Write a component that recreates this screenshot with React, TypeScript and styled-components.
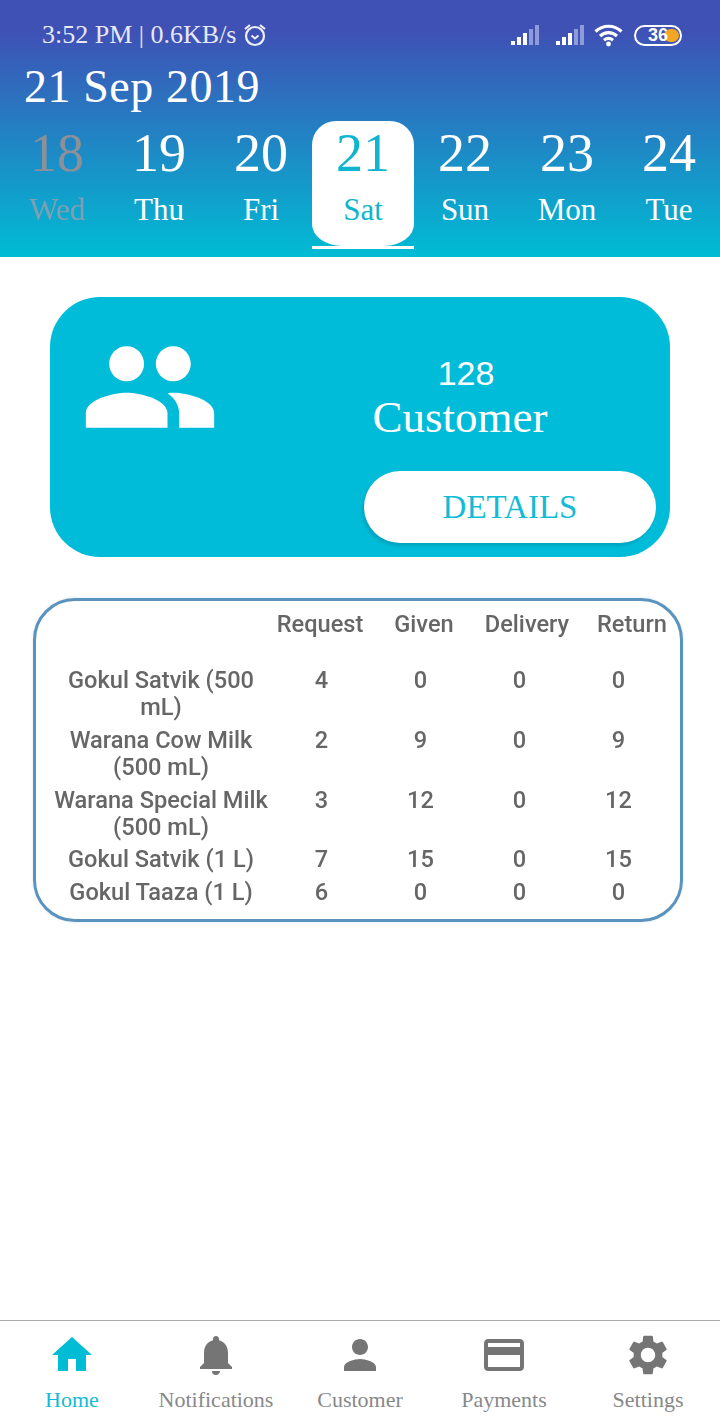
import React from "react";
import styled, { createGlobalStyle } from "styled-components";
import { MdHome, MdNotifications, MdPerson, MdCreditCard, MdSettings, MdPeople } from "react-icons/md";

const Global = createGlobalStyle`
  html, body { margin: 0; padding: 0; background: #fff; }
  * { box-sizing: border-box; }
`;
const SERIF = `"Liberation Serif", serif`;

const Page = styled.div`
  width: 720px; height: 1424px; display: flex; flex-direction: column; background: #fff;
  font-family: ${SERIF}; overflow: hidden;
`;
const Header = styled.header`
  height: 257px; flex: none; padding: 0 6px; color: #fff;
  background: linear-gradient(180deg, #3f51b5 0%, #3f51b5 12%, #00bcd4 100%);
`;
const StatusBar = styled.div`
  height: 70px; display: flex; align-items: center; justify-content: space-between;
  padding: 0 32px 0 36px; color: #e6e8f6; font-size: 26px;
`;
const StatusLeft = styled.div`display: flex; align-items: center; gap: 6px;`;
const StatusRight = styled.div`display: flex; align-items: center; gap: 10px;`;
const SignalGroup = styled.div`display: flex; align-items: center; gap: 17px;`;
const DateTitle = styled.div`
  height: 51px; padding-left: 18px; font-size: 46px; line-height: 34px; letter-spacing: 0.56px;
`;
const Days = styled.div`display: grid; grid-template-columns: repeat(7, 102px);`;
const DayCell = styled.div<{ $selected?: boolean }>`
  height: 128px; border-bottom: 3px solid ${p => (p.$selected ? "#fff" : "transparent")};
`;
const DayInner = styled.div<{ $selected?: boolean }>`
  height: 125px; display: flex; flex-direction: column; align-items: center;
  padding-top: 1px;
  border-radius: 24px 24px 30px 30px / 24px 24px 22px 22px;
  background: ${p => (p.$selected ? "#fff" : "transparent")};
  color: ${p => (p.$selected ? "#0fb5cf" : "#fff")};
`;
const DayNum = styled.span<{ $past?: boolean }>`
  font-size: 54px; line-height: 62px; color: ${p => (p.$past ? "#8b9099" : "inherit")};
`;
const DayName = styled.span<{ $past?: boolean }>`
  font-size: 31px; line-height: 36px; margin-top: 8px; color: ${p => (p.$past ? "#7d9fb4" : "inherit")};
`;
const Main = styled.main`flex: 1; display: flex; flex-direction: column; align-items: center; padding-top: 40px;`;
const Card = styled.section`
  width: 620px; height: 260px; border-radius: 50px; background: #00bcd8; color: #fff;
  display: flex; flex-direction: column; padding: 20px 14px 14px 30px;
`;
const CardTop = styled.div`flex: 1; display: flex; align-items: flex-start;`;
const CardText = styled.div`flex: 1; display: flex; flex-direction: column; align-items: center; padding: 35px 0 0 44px;`;
const Count = styled.div`
  font-family: "Liberation Sans", sans-serif; font-size: 34px; line-height: 42px; margin-left: 12px;
`;
const Label = styled.div`font-size: 45px; line-height: 46px;`;
const DetailsButton = styled.button`
  align-self: flex-end; width: 292px; height: 72px; border: 0; border-radius: 36px; background: #fff;
  color: #12bcd6; font-family: ${SERIF}; font-size: 33px; padding: 0;
  box-shadow: -2px 3px 3px rgba(0, 120, 150, 0.35);
`;
const TableBox = styled.section`
  width: 650px; height: 324px; margin: 41px 4px 0 0; border: 3px solid #5b93bf; border-radius: 42px;
  padding: 10px 0 0 10px; color: #666; font-family: Roboto, sans-serif; font-weight: 500; font-size: 23.6px;
  box-shadow: 0 0 3px rgba(91, 147, 191, 0.25); filter: blur(0.35px);
`;
const HeadRow = styled.div`
  display: grid; grid-template-columns: 220px 108px 100px 106px 100px; height: 44px; line-height: 26px; text-align: center;
  align-items: start; margin-bottom: 12px; white-space: nowrap;
`;
const ReturnHead = styled.span`padding-left: 4px;`;
const Row = styled.div`
  display: grid; grid-template-columns: 226px 99px 99px 99px 99px; text-align: center; line-height: 27.4px;
  margin-bottom: 5px; align-items: start;
`;
const Name = styled.div`padding-left: 4px;`;
const Nav = styled.nav`
  height: 104px; flex: none; border-top: 1px solid #aaa; display: grid; grid-template-columns: repeat(5, 144px);
  background: #fff;
`;
const NavItem = styled.div<{ $active?: boolean }>`
  display: flex; flex-direction: column; align-items: center; padding-top: 10px;
  color: ${p => (p.$active ? "#00bcd4" : "#757575")};
`;
const NavLabel = styled.span<{ $active?: boolean }>`
  font-size: 22px; line-height: 26px; margin-top: 8px; color: ${p => (p.$active ? "#12bcd6" : "#888")};
`;

const Alarm = () => (
  <svg width="26" height="26" viewBox="0 0 26 26" fill="none" stroke="#eef0fa" strokeWidth="2.2">
    <circle cx="13" cy="14" r="9" />
    <path d="M9.5 13.5l3.5 3 3.5-3" strokeWidth="2" />
    <path d="M3 7l5-4M23 7l-5-4" />
  </svg>
);
const Signal = () => (
  <svg width="28" height="20" viewBox="0 0 28 20">
    <rect x="0" y="16" width="4" height="4" fill="#fff" />
    <rect x="6" y="12" width="4" height="8" fill="#fff" />
    <rect x="12" y="8" width="4" height="12" fill="#fff" />
    <rect x="18" y="4" width="4" height="16" fill="#8f9ad8" />
    <rect x="24" y="0" width="4" height="20" fill="#8f9ad8" />
  </svg>
);
const Wifi = () => (
  <svg width="30" height="24" viewBox="0 0 30 24" fill="none" stroke="#fff" strokeWidth="3.2">
    <path d="M1.5 8.5C9 1.5 20 1.5 27.5 8.5" />
    <path d="M6 13c5-4.5 12-4.5 17 0" />
    <path d="M10 17.2c3-2.4 6-2.4 9 0" />
    <circle cx="14.5" cy="21" r="2.4" fill="#fff" stroke="none" />
  </svg>
);
const BatteryShell = styled.div`
  width: 48px; height: 21px; border: 2px solid #fff; border-radius: 11px; display: flex; align-items: center;
  justify-content: center; overflow: hidden; position: relative;
  font-family: "Liberation Sans", sans-serif; font-weight: 700; font-size: 18px; color: #fff;
`;
const BatteryFill = styled.span`
  position: absolute; right: 1px; top: 2px; width: 15px; height: 13px; border-radius: 7px; background: #f5a623;
`;
const BatteryText = styled.span`position: relative;`;

const days = [
  ["18", "Wed"], ["19", "Thu"], ["20", "Fri"], ["21", "Sat"], ["22", "Sun"], ["23", "Mon"], ["24", "Tue"],
];
const rows: [string[], number, number, number, number][] = [
  [["Gokul Satvik (500", "mL)"], 4, 0, 0, 0],
  [["Warana Cow Milk", "(500 mL)"], 2, 9, 0, 9],
  [["Warana Special Milk", "(500 mL)"], 3, 12, 0, 12],
  [["Gokul Satvik (1 L)"], 7, 15, 0, 15],
  [["Gokul Taaza (1 L)"], 6, 0, 0, 0],
];
const navItems = [
  { label: "Home", Icon: MdHome },
  { label: "Notifications", Icon: MdNotifications },
  { label: "Customer", Icon: MdPerson },
  { label: "Payments", Icon: MdCreditCard },
  { label: "Settings", Icon: MdSettings },
];

export default function App() {
  return (
    <Page>
      <Global />
      <Header>
        <StatusBar>
          <StatusLeft>3:52 PM | 0.6KB/s <Alarm /></StatusLeft>
          <StatusRight>
            <SignalGroup><Signal /><Signal /></SignalGroup>
            <Wifi />
            <BatteryShell><BatteryFill /><BatteryText>36</BatteryText></BatteryShell>
          </StatusRight>
        </StatusBar>
        <DateTitle>21 Sep 2019</DateTitle>
        <Days>
          {days.map(([n, d], i) => (
            <DayCell key={n} $selected={i === 3}>
              <DayInner $selected={i === 3}>
                <DayNum $past={i === 0}>{n}</DayNum>
                <DayName $past={i === 0}>{d}</DayName>
              </DayInner>
            </DayCell>
          ))}
        </Days>
      </Header>
      <Main>
        <Card>
          <CardTop>
            <MdPeople size={140} color="#fff" />
            <CardText>
              <Count>128</Count>
              <Label>Customer</Label>
            </CardText>
          </CardTop>
          <DetailsButton>DETAILS</DetailsButton>
        </Card>
        <TableBox>
          <HeadRow>
            <span />
            <span>Request</span>
            <span>Given</span>
            <span>Delivery</span>
            <ReturnHead>Return</ReturnHead>
          </HeadRow>
          {rows.map(([name, a, b, c, d]) => (
            <Row key={name.join()}>
              <Name>{name.map(l => <div key={l}>{l}</div>)}</Name>
              <span>{a}</span>
              <span>{b}</span>
              <span>{c}</span>
              <span>{d}</span>
            </Row>
          ))}
        </TableBox>
      </Main>
      <Nav>
        {navItems.map(({ label, Icon }, i) => (
          <NavItem key={label} $active={i === 0}>
            <Icon size={48} />
            <NavLabel $active={i === 0}>{label}</NavLabel>
          </NavItem>
        ))}
      </Nav>
    </Page>
  );
}
